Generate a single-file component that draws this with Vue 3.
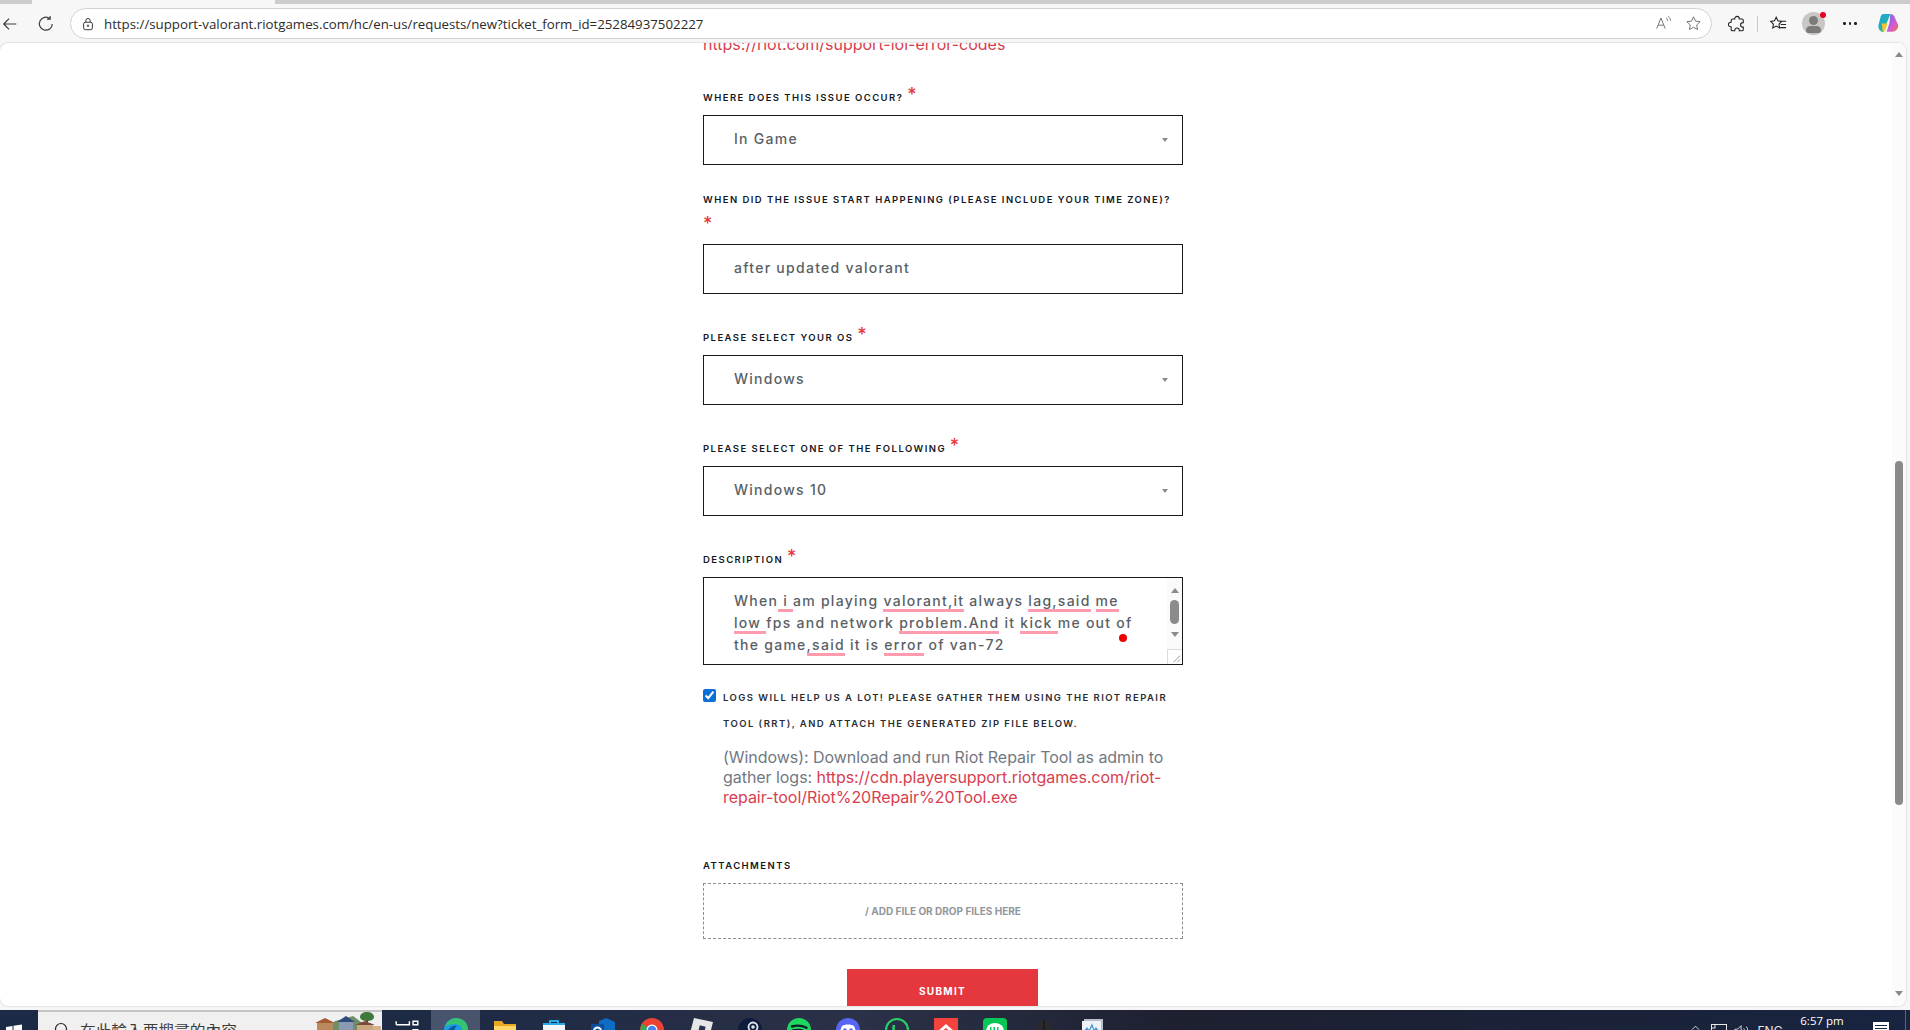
<template>
  <div class="screen">
    <div class="tabstrip"><div class="active-tab"></div></div>

    <div class="toolbar">
      <svg class="nav-icon back" viewBox="0 0 20 20"><path d="M17 10H3M9 4l-6 6 6 6" /></svg>
      <svg class="nav-icon reload" viewBox="0 0 20 20"><path d="M14.5 4.2A7.2 7.2 0 1 0 17 10M14.6 1v3.6H11" /></svg>
      <div class="addressbar">
        <svg class="lock" viewBox="0 0 16 16"><rect x="3" y="6" width="10" height="8.5" rx="2" /><path d="M5.5 6V4.2a2.5 2.5 0 0 1 5 0V6" /><circle cx="8" cy="10" r=".9" /></svg>
        <span class="url">https://support-valorant.riotgames.com/hc/en-us/requests/new?ticket_form_id=25284937502227</span>
        <svg class="bar-icon aloud" viewBox="0 0 20 20"><path d="M2 16L7 3.5 12 16M4 12h6M13 3.5c1.300.8 1.800 2 1.800 3.300M15.500 1.800c2 1.300 2.800 3 2.800 5" /></svg>
        <svg class="bar-icon" viewBox="0 0 20 20"><path d="M10 2.200l2.400 5 5.400.7-4 3.800 1 5.400-4.800-2.600-4.800 2.600 1-5.400-4-3.800 5.400-.7z" /></svg>
      </div>
      <svg class="tool-icon ext" viewBox="0 0 20 20"><path d="M7.500 4.500V4a2.500 2.500 0 0 1 5 0v.5h3a1.500 1.500 0 0 1 1.500 1.500v2.500h-.5a2.500 2.500 0 0 0 0 5h.5V16a1.500 1.500 0 0 1-1.500 1.500h-3V17a2.500 2.500 0 0 0-5 0v.5H5A1.500 1.500 0 0 1 3.500 16v-3H3a2.500 2.500 0 0 1 0-5h.5V6A1.500 1.500 0 0 1 5 4.500z" /></svg>
      <div class="divider"></div>
      <svg class="tool-icon" viewBox="0 0 20 20"><path d="M8 2.500l1.900 4 4.200.6-3 3 .7 4.300L8 12.300l-3.800 2.100.7-4.300-3-3 4.200-.6zM14 7h5M13 10.500h6M12.500 14H19" /></svg>
      <div class="avatar">
        <span class="avatar-head"></span>
        <span class="avatar-body"></span>
        <span class="avatar-dot"></span>
      </div>
      <div class="more"><i></i><i></i><i></i></div>
      <svg class="copilot" viewBox="0 0 24 24">
        <defs>
          <linearGradient id="cp1" x1="0" y1="0" x2="1" y2="1"><stop offset="0" stop-color="#1c9cf0" /><stop offset="1" stop-color="#28c76f" /></linearGradient>
          <linearGradient id="cp2" x1="0" y1="0" x2="1" y2="1"><stop offset="0" stop-color="#5b6cf2" /><stop offset=".6" stop-color="#d65ad6" /><stop offset="1" stop-color="#f0702c" /></linearGradient>
        </defs>
        <path fill="url(#cp1)" d="M7 2h7l-4 10-3 9c-3 0-6-3-5.500-7L3.500 6C4 3.500 5 2 7 2z" />
        <path fill="#f4c430" d="M5 12h6l-2.500 7.500L6 21z" />
        <path fill="url(#cp2)" d="M14 2c2 0 3.500 1 4.500 3.500l3.500 8c.5 4-2.500 7-6 7h-6l3-9z" />
      </svg>
    </div>

    <div class="page">
      <div class="content">
        <form class="form" @submit.prevent>
          <a class="top-link">https://riot.com/support-lol-error-codes</a>

          <div v-for="field in fields" :key="field.label" class="field" :class="{ wrapped: field.wrapped }">
            <div class="label">{{ field.label }} <span class="star">*</span></div>
            <div class="control">
              <span class="value">{{ field.value }}</span>
              <span v-if="field.select" class="caret"></span>
            </div>
          </div>

          <div class="field">
            <div class="label">Description <span class="star">*</span></div>
            <div class="textarea">
              <div class="textarea-text">
                When<span class="sp"> i </span>am playing <span class="sp">valorant,it</span> always <span class="sp">lag,said</span> <span class="sp">me</span><br />
                <span class="sp">low </span>fps and network <span class="sp">problem.And</span> it <span class="sp">kick </span>me out of<br />
                the game<span class="sp">,said</span> it is <span class="sp">error</span> of van-72
              </div>
              <div class="ta-scroll">
                <span class="arrow-up"></span>
                <span class="ta-thumb"></span>
                <span class="arrow-down"></span>
                <span class="resizer">
                  <svg viewBox="0 0 15 15"><path d="M13 6l-7 7M13 10l-3 3" /></svg>
                </span>
              </div>
              <span class="red-dot"></span>
            </div>
          </div>

          <div class="logs">
            <input class="check" type="checkbox" checked />
            <div class="logs-body">
              <div class="logs-label">Logs will help us a lot! Please gather them using the Riot Repair Tool (RRT), and attach the generated ZIP file below.</div>
              <p class="logs-text">(Windows): Download and run Riot Repair Tool as admin to gather logs: <a>https://cdn.playersupport.riotgames.com/riot-repair-tool/Riot%20Repair%20Tool.exe</a></p>
            </div>
          </div>

          <div class="label attach-label">Attachments</div>
          <div class="dropzone">/ Add file or drop files here</div>

          <button class="submit" type="submit">Submit</button>
        </form>
      </div>

      <div class="scrollbar">
        <span class="arrow-up"></span>
        <span class="thumb"></span>
        <span class="arrow-down"></span>
      </div>
    </div>

    <div class="taskbar">
      <div class="start">
        <svg viewBox="0 0 16 16"><path d="M0 5l6.500-1v5.500H0zM7.500 3.800L16 2.500v7H7.500zM0 10.500h6.500V16L0 15zM7.500 10.500H16v5.500l-8.500-1.200z" /></svg>
      </div>
      <div class="search">
        <svg class="search-icon" viewBox="0 0 16 16"><circle cx="7" cy="7" r="5.500" /><path d="M11 11l4 4" /></svg>
        <span class="search-text">在此輸入要搜尋的內容</span>
        <svg class="scene" viewBox="0 0 70 20">
          <path fill="#6f8f6a" d="M14 20l10-11 8-2 10-3 8 6 20 10z" />
          <path fill="#3f7a3c" d="M56 0c4 0 7 2 7 5s-4 4-7 4-7-1-7-4 3-5 7-5z" />
          <rect x="55" y="8" width="2" height="8" fill="#6b4a2a" />
          <rect x="6" y="10" width="16" height="10" fill="#b98a5e" />
          <path fill="#a65a32" d="M4 11l10-5 10 5z" />
          <rect x="28" y="9" width="14" height="11" fill="#8a9ab0" />
          <path fill="#2f4a7a" d="M26 10l9-6 9 6z" />
          <rect x="46" y="12" width="16" height="8" fill="#c9a77f" />
          <path fill="#7a4a3a" d="M44 13l10-4 10 4z" />
          <rect x="62" y="14" width="8" height="6" fill="#d6b28c" />
        </svg>
      </div>

      <div class="task-btn">
        <svg class="taskview" viewBox="0 0 20 20"><path d="M1 4V1M1 4h11V1M1 9h11v11H1zM15 1h4v3h-4zM15 8h4v10h-4z" /></svg>
      </div>
      <div class="task-btn running">
        <svg viewBox="0 0 24 24"><circle cx="12" cy="12" r="12" fill="#1b9de2" /><path fill="#35c46f" d="M1 9C3 3 8 0 12 0c7 0 12 5 12 11 0 3-3 4-6 3 1-4-2-8-7-8-4 0-8 1-10 3z" /><path fill="#0c59a4" d="M3 14c2-5 7-7 10-6-3 2-4 6-1 12-4 0-8-2-9-6z" /></svg>
      </div>
      <div class="task-btn">
        <svg viewBox="0 0 24 24"><path fill="#e8a920" d="M1 3h8l2 3h12v15H1z" /><path fill="#ffd766" d="M1 8h22v14H1z" /></svg>
      </div>
      <div class="task-btn">
        <svg viewBox="0 0 24 24"><path fill="none" stroke="#29a9e8" stroke-width="2" d="M8 6V3h8v3" /><rect x="1" y="5" width="22" height="19" fill="#f4f4f4" /><rect x="1" y="5" width="22" height="2" fill="#29a9e8" /><rect x="8" y="14" width="3.500" height="3.500" fill="#e8552d" /><rect x="12.500" y="14" width="3.500" height="3.500" fill="#7cb927" /></svg>
      </div>
      <div class="task-btn">
        <svg viewBox="0 0 24 24"><path fill="#0f6cc4" d="M8 3l7-3 9 4v18H8z" /><rect x="0" y="6" width="13" height="14" fill="#0a4f9e" /><circle cx="6.500" cy="13" r="3.500" fill="none" stroke="#fff" stroke-width="2" /></svg>
      </div>
      <div class="task-btn">
        <svg viewBox="0 0 24 24"><circle cx="12" cy="12" r="12" fill="#ea4335" /><path fill="#fbbc05" d="M12 12L24 12A12 12 0 0 1 12 24z" /><path fill="#34a853" d="M12 12v12A12 12 0 0 1 2 6z" /><circle cx="12" cy="12" r="5.500" fill="#fff" /><circle cx="12" cy="12" r="4.300" fill="#4285f4" /></svg>
      </div>
      <div class="task-btn">
        <svg viewBox="0 0 24 24"><path fill="#e6e6e6" d="M5 0l19 4-5 20L0 19z" /><rect x="10" y="8" width="6" height="6" fill="#26334d" transform="rotate(14 13 11)" /></svg>
      </div>
      <div class="task-btn">
        <svg viewBox="0 0 24 24"><circle cx="12" cy="12" r="12" fill="#0e1c3c" /><circle cx="15" cy="9" r="4.500" fill="none" stroke="#e4e7ee" stroke-width="1.800" /><circle cx="15" cy="9" r="1.800" fill="#e4e7ee" /></svg>
      </div>
      <div class="task-btn">
        <svg viewBox="0 0 24 24"><circle cx="12" cy="12" r="12" fill="#1ed760" /><path fill="none" stroke="#10202a" stroke-width="2.400" stroke-linecap="round" d="M5 8.500c5-1.500 10-1 14.500 1.300M6 12.500c4-1 9-.6 12 1.300" /></svg>
      </div>
      <div class="task-btn">
        <svg viewBox="0 0 24 24"><circle cx="12" cy="12" r="12" fill="#5865f2" /><path fill="#fff" d="M6 8c3-2 9-2 12 0 1 2 2 5 2 8H4c0-3 1-6 2-8z" /><circle cx="9" cy="12" r="1.800" fill="#5865f2" /><circle cx="15" cy="12" r="1.800" fill="#5865f2" /></svg>
      </div>
      <div class="task-btn">
        <svg viewBox="0 0 24 24"><circle cx="12" cy="12" r="11" fill="none" stroke="#25d366" stroke-width="2" /><path fill="none" stroke="#25d366" stroke-width="2.500" d="M9 7c-1 4 0 8 3 10" /></svg>
      </div>
      <div class="task-btn">
        <svg viewBox="0 0 24 24"><rect width="24" height="24" fill="#f4433c" /><path fill="#fff" d="M12 6l8 7-2 2-6-5-6 5-2-2z" /></svg>
      </div>
      <div class="task-btn">
        <svg viewBox="0 0 24 24"><rect width="24" height="24" rx="4" fill="#06c755" /><ellipse cx="12" cy="13" rx="9" ry="8" fill="#fff" /><rect x="7" y="9" width="1.500" height="6" fill="#06c755" /><rect x="10.500" y="9" width="1.500" height="6" fill="#06c755" /><rect x="14" y="9" width="1.500" height="6" fill="#06c755" /></svg>
      </div>
      <div class="task-btn">
        <svg viewBox="0 0 24 24"><path fill="#2a2a2e" d="M12 2c5 0 8 4 8 10H4C4 6 7 2 12 2z" /><path stroke="#1a1a1d" stroke-width="1.500" d="M12 2v10" /></svg>
      </div>
      <div class="task-btn">
        <svg viewBox="0 0 24 24"><rect x="3" y="1" width="19" height="20" fill="#b9bec6" /><rect x="1" y="3" width="19" height="20" fill="#eef1f5" /><path fill="none" stroke="#4a9ad4" stroke-width="1.300" d="M3 14l3-4 2 3 3-6 2 6 2-3 3 4" /></svg>
      </div>

      <div class="tray">
        <svg class="tray-chevron" viewBox="0 0 10 6"><path d="M1 5l4-4 4 4" /></svg>
        <svg class="tray-net" viewBox="0 0 16 14"><rect x=".5" y=".5" width="15" height="12" /><rect x=".5" y=".5" width="3.500" height="3.500" /></svg>
        <svg class="tray-vol" viewBox="0 0 18 14"><path d="M1 5h3l4-4v12L4 9H1zM11 4c1 1.500 1 4.500 0 6M14 2c2 3 2 7 0 10" /></svg>
        <span class="tray-lang">ENG</span>
        <span class="tray-clock">6:57 pm</span>
        <span class="tray-notif"><i></i><i></i><i></i></span>
        <span class="tray-edge"></span>
      </div>
    </div>
  </div>
</template>

<script setup>
const fields = [
  { label: 'Where does this issue occur?', value: 'In Game', select: true },
  { label: 'When did the issue start happening (please include your time zone)?', value: 'after updated valorant', select: false, wrapped: true },
  { label: 'Please select your OS', value: 'Windows', select: true },
  { label: 'Please select one of the following', value: 'Windows 10', select: true },
]
</script>

<style>
html, body {
  margin: 0;
  overflow: hidden;
}
</style>

<style scoped>
.screen {
  width: 1910px;
  height: 1030px;
  display: flex;
  flex-direction: column;
  background: #f7f7f7;
  font-family: Inter, "Liberation Sans", sans-serif;
  overflow: hidden;
}

.tabstrip {
  height: 4px;
  background: #cccccc;
  flex: none;
}
.active-tab {
  width: 243px;
  height: 4px;
  margin-left: 32px;
  background: #f7f7f7;
}

.toolbar {
  height: 39px;
  flex: none;
  display: flex;
  align-items: center;
  background: #f7f7f7;
}
.nav-icon {
  width: 18px;
  height: 18px;
  fill: none;
  stroke: #3a3a3a;
  stroke-width: 1.300;
  flex: none;
}
.back {
  margin-left: 1px;
}
.reload {
  margin-left: 18px;
}
.addressbar {
  width: 1642px;
  height: 31px;
  margin-left: 15px;
  box-sizing: border-box;
  border: 1px solid #d2d2d2;
  border-radius: 16px;
  background: #fff;
  display: flex;
  align-items: center;
  padding-left: 10px;
  flex: none;
}
.lock {
  width: 14px;
  height: 14px;
  fill: none;
  stroke: #333;
  stroke-width: 1.100;
  flex: none;
}
.url {
  margin-left: 9px;
  font-family: "Open Sans", sans-serif;
  font-size: 13.280px;
  color: #2b2b2b;
  flex: 1;
  white-space: nowrap;
}
.bar-icon {
  width: 17px;
  height: 17px;
  fill: none;
  stroke: #6b6b6b;
  stroke-width: 1.100;
  margin-right: 9px;
  flex: none;
}
.aloud {
  margin-right: 13px;
}
.tool-icon {
  width: 18px;
  height: 18px;
  fill: none;
  stroke: #222;
  stroke-width: 1.200;
  flex: none;
}
.ext {
  margin-left: 16px;
}
.divider {
  width: 1px;
  height: 16px;
  background: #c8c8c8;
  margin: 0 11px;
  flex: none;
}
.avatar {
  position: relative;
  width: 23px;
  height: 23px;
  margin-left: 15px;
  border-radius: 50%;
  background: #c9c7c5;
  overflow: visible;
  flex: none;
}
.avatar-head {
  position: absolute;
  left: 7px;
  top: 4px;
  width: 9px;
  height: 9px;
  border-radius: 50%;
  background: #7d7b79;
}
.avatar-body {
  position: absolute;
  left: 4px;
  top: 14px;
  width: 15px;
  height: 7px;
  border-radius: 8px 8px 5px 5px;
  background: #7d7b79;
}
.avatar-dot {
  position: absolute;
  right: -1px;
  top: 0;
  width: 6px;
  height: 6px;
  border-radius: 50%;
  background: #e8001c;
}
.more {
  display: flex;
  gap: 3px;
  margin-left: 18px;
  flex: none;
}
.more i {
  width: 2.500px;
  height: 2.500px;
  border-radius: 50%;
  background: #222;
}
.copilot {
  width: 23px;
  height: 23px;
  margin-left: 20px;
  flex: none;
}

.page {
  height: 963px;
  width: 1906px;
  flex: none;
  margin-top: 0;
  display: flex;
  background: #fff;
  border-radius: 8px;
  box-shadow: 0 0 2px rgba(0, 0, 0, .25);
  overflow: hidden;
}
.content {
  flex: 1;
  overflow: hidden;
}
.form {
  width: 480px;
  margin-left: 703px;
  margin-top: -9px;
}
.top-link {
  display: block;
  font-size: 16px;
  line-height: 20px;
  color: #d93e4e;
}

.field {
  margin-top: 27px;
}
.field:first-of-type {
  margin-top: 27px;
}
.field.wrapped {
  margin-top: 25px;
}
.label {
  font-size: 9.500px;
  line-height: 20px;
  font-weight: 600;
  letter-spacing: 1.450px;
  text-transform: uppercase;
  color: #14181f;
  margin-bottom: 6px;
}
.star {
  font-size: 18px;
  line-height: 28px;
  font-weight: 500;
  color: #e5383b;
  letter-spacing: 0;
}
.control {
  height: 50px;
  box-sizing: border-box;
  border: 1.300px solid #16181c;
  display: flex;
  align-items: center;
  justify-content: space-between;
  padding: 0 14px 0 30px;
  font-size: 14px;
  font-weight: 500;
  letter-spacing: 1.270px;
  color: #5a5f66;
}
.value {
  margin-bottom: 3px;
}
.caret {
  width: 0;
  height: 0;
  border-left: 3px solid transparent;
  border-right: 3px solid transparent;
  border-top: 4px solid #8a8a8a;
}

.textarea {
  position: relative;
  height: 88px;
  box-sizing: border-box;
  border: 1.300px solid #16181c;
  display: flex;
}
.textarea-text {
  flex: 1;
  padding: 12px 0 0 30px;
  font-size: 14px;
  line-height: 22px;
  font-weight: 500;
  letter-spacing: 1.270px;
  color: #5a5f66;
  white-space: nowrap;
}
.sp {
  box-shadow: inset 0 -3px 0 #ff9bae;
  padding-bottom: 3px;
}
.ta-scroll {
  width: 15px;
  flex: none;
  background: #fafafa;
  display: flex;
  flex-direction: column;
  align-items: center;
  position: relative;
}
.ta-scroll .arrow-up {
  margin-top: 10px;
}
.ta-thumb {
  width: 9px;
  height: 24px;
  margin-top: 7px;
  border-radius: 5px;
  background: #8b8b8b;
}
.ta-scroll .arrow-down {
  margin-top: 8px;
}
.resizer {
  position: absolute;
  right: 0;
  bottom: 0;
  width: 15px;
  height: 15px;
  box-sizing: border-box;
  border-left: 1px solid #dcdcdc;
  border-top: 1px solid #dcdcdc;
  background: #fff;
}
.resizer svg {
  display: block;
  width: 14px;
  height: 14px;
  fill: none;
  stroke: #777;
  stroke-width: .8;
}
.red-dot {
  position: absolute;
  left: 415px;
  top: 56px;
  width: 8px;
  height: 8px;
  border-radius: 50%;
  background: #ee0000;
}
.arrow-up {
  width: 0;
  height: 0;
  border-left: 4.500px solid transparent;
  border-right: 4.500px solid transparent;
  border-bottom: 5px solid #8a8a8a;
}
.arrow-down {
  width: 0;
  height: 0;
  border-left: 4.500px solid transparent;
  border-right: 4.500px solid transparent;
  border-top: 5px solid #8a8a8a;
}

.logs {
  display: flex;
  margin-top: 24px;
}
.check {
  width: 13px;
  height: 13px;
  margin: 0;
  accent-color: #0a6fd8;
  flex: none;
}
.logs-body {
  margin-left: 7px;
}
.logs-label {
  margin-top: -4px;
  font-size: 9.500px;
  line-height: 26px;
  font-weight: 600;
  letter-spacing: 1.450px;
  text-transform: uppercase;
  color: #2a2d33;
}
.logs-text {
  margin: 10px 0 0;
  font-size: 16px;
  line-height: 20px;
  letter-spacing: -.05px;
  color: #727882;
}
.logs-text a {
  color: #d93e4e;
}

.attach-label {
  margin-top: 52px;
  line-height: 14px;
  margin-bottom: 10px;
}
.dropzone {
  height: 56px;
  box-sizing: border-box;
  border: 1px dashed #8e8e8e;
  display: flex;
  align-items: center;
  justify-content: center;
  font-size: 10px;
  font-weight: 700;
  text-transform: uppercase;
  color: #92969d;
}
.submit {
  display: block;
  width: 191px;
  height: 44px;
  margin: 30px 0 0 144px;
  border: 0;
  background: #e5383e;
  color: #fff;
  font-family: Inter, sans-serif;
  font-size: 10px;
  font-weight: 700;
  letter-spacing: 1.300px;
  text-transform: uppercase;
}

.scrollbar {
  width: 14px;
  flex: none;
  background: #fbfbfb;
  display: flex;
  flex-direction: column;
  align-items: center;
  position: relative;
}
.scrollbar .arrow-up {
  margin-top: 9px;
}
.thumb {
  position: absolute;
  top: 418px;
  width: 8px;
  height: 344px;
  border-radius: 4px;
  background: #8a8a8a;
}
.scrollbar .arrow-down {
  margin-top: auto;
  margin-bottom: 10px;
}

.taskbar {
  height: 20px;
  margin-top: 4px;
  flex: none;
  display: flex;
  background: linear-gradient(90deg, #1b2a45 0%, #1e2a44 25%, #2b3147 45%, #1e2030 62%, #182440 100%);
  overflow: hidden;
}
.start {
  width: 38px;
  flex: none;
  padding: 12px 0 0 6px;
  box-sizing: border-box;
}
.start svg {
  display: block;
  width: 16px;
  height: 16px;
  fill: #fff;
}
.search {
  width: 344px;
  height: 34px;
  box-sizing: border-box;
  flex: none;
  display: flex;
  align-items: flex-start;
  background: #f0f0f0;
  border-top: 2px solid #c4c4c4;
  padding-left: 16px;
  position: relative;
}
.search-icon {
  width: 16px;
  height: 16px;
  margin-top: 10px;
  fill: none;
  stroke: #222;
  stroke-width: 1.200;
  flex: none;
}
.search-text {
  margin-left: 10px;
  margin-top: 8px;
  font-family: "Noto Sans CJK TC", sans-serif;
  font-size: 15.700px;
  line-height: 22px;
  color: #3c3c3c;
  white-space: nowrap;
}
.scene {
  width: 72px;
  height: 20px;
  margin-left: auto;
  flex: none;
}
.task-btn {
  width: 49px;
  flex: none;
  display: flex;
  justify-content: center;
  padding-top: 8px;
  box-sizing: border-box;
}
.task-btn svg {
  width: 24px;
  height: 24px;
  flex: none;
}
.task-btn.running {
  background: #47546b;
}
.taskview {
  fill: none;
  stroke: #fff;
  stroke-width: 1.200;
  margin-top: 2px;
}

.tray {
  margin-left: auto;
  display: flex;
  align-items: flex-start;
  color: #fff;
}
.tray svg {
  fill: none;
  stroke: #e8e8e8;
  stroke-width: 1;
  flex: none;
}
.tray-chevron {
  width: 9px;
  height: 6px;
  margin: 15px 11px 0 0;
}
.tray-net {
  width: 16px;
  height: 14px;
  margin: 14px 0 0 0;
}
.tray-vol {
  width: 16px;
  height: 14px;
  margin: 14px 0 0 7px;
}
.tray-lang {
  width: 36px;
  margin-left: 2px;
  padding-top: 14px;
  font-size: 12px;
  line-height: 14px;
  text-align: center;
  color: #e8e8e8;
}
.tray-clock {
  width: 72px;
  margin-left: -2px;
  padding-top: 4px;
  font-family: "Open Sans", sans-serif;
  font-size: 11.500px;
  line-height: 14px;
  text-align: center;
  white-space: nowrap;
}
.tray-notif {
  width: 16px;
  margin: 12px 16px 0 15px;
  display: flex;
  flex-direction: column;
  gap: 2px;
  box-sizing: border-box;
  background: #fff;
  height: 18px;
  padding: 3px 2px;
}
.tray-notif i {
  display: block;
  height: 1px;
  background: #1c2540;
}
.tray-edge {
  width: 1px;
  height: 20px;
  margin-right: 4px;
  background: #5c6478;
}
</style>
